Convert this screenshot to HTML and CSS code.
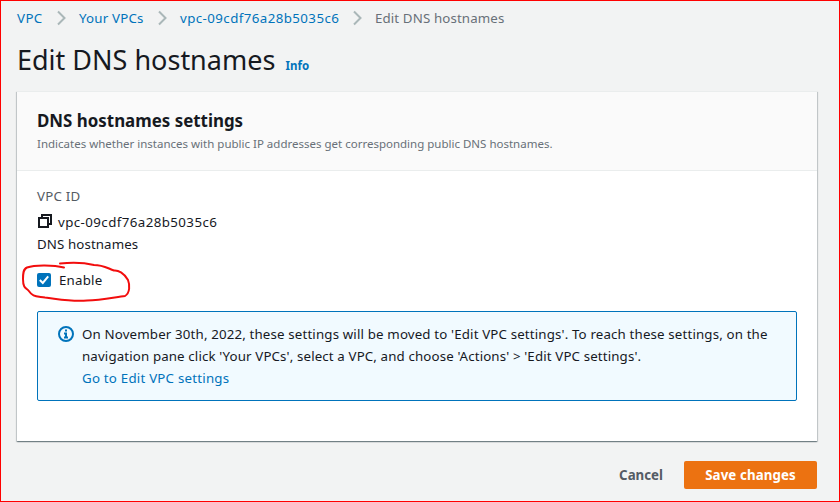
FILE: index.html
```html
<!DOCTYPE html>
<html lang="en">
<head>
<meta charset="utf-8">
<title>Edit DNS hostnames</title>
<link rel="stylesheet" href="styles.css">
</head>
<body>
<div class="page">
  <nav class="breadcrumbs">
    <a class="crumb-root">VPC</a>
    <svg class="chevron" width="10" height="16" viewBox="0 0 10 16"><path d="M1 1.5 7.5 8 1 14.5"/></svg>
    <a class="crumb-list">Your VPCs</a>
    <svg class="chevron" width="10" height="16" viewBox="0 0 10 16"><path d="M1 1.5 7.5 8 1 14.5"/></svg>
    <a class="crumb-id">vpc-09cdf76a28b5035c6</a>
    <svg class="chevron" width="10" height="16" viewBox="0 0 10 16"><path d="M1 1.5 7.5 8 1 14.5"/></svg>
    <span class="crumb-current">Edit DNS hostnames</span>
  </nav>
  <header class="title-row">
    <h1>Edit DNS hostnames</h1>
    <a class="info-link">Info</a>
  </header>
  <main class="card">
    <div class="card-header">
      <h2>DNS hostnames settings</h2>
      <p>Indicates whether instances with public IP addresses get corresponding public DNS hostnames.</p>
    </div>
    <div class="card-body">
      <div class="label">VPC ID</div>
      <div class="vpc-value">
        <svg width="16" height="16" viewBox="0 0 16 16"><path d="M2 5h9v9H2zM5 5V2h9v9h-3"/></svg>
        <span>vpc-09cdf76a28b5035c6</span>
      </div>
      <div class="field-name">DNS hostnames</div>
      <div class="enable-row">
        <span class="checkbox"><svg width="14" height="14" viewBox="0 0 14 14"><path d="M2.8 7 5.8 10 11.2 3.4"/></svg></span>
        <span class="enable-label">Enable</span>
        <svg class="annotation" width="112" height="46" viewBox="0 0 112 46"><path d="M42 7.500C32 5 13 4.500 5 7.500C1 9 1 14 1 19C1 27 3 28 6 30C11 37 13 36 23 37.500C39 39.500 51 42 65 40.500C79 40 94 37 103 36C108 33 108 25 106 20C102 13 96 10 92 10.500C85 8 81 5 72 5C64 3 52 2 38 3.500"/></svg>
      </div>
      <div class="notice">
        <svg width="16" height="16" viewBox="0 0 16 16"><circle cx="8" cy="8" r="7"/><path d="M7 4.500h2M6 7.500h2V11M6 11.500h4"/></svg>
        <div class="notice-text">
          <div class="line-one">On November 30th, 2022, these settings will be moved to 'Edit VPC settings'. To reach these settings, on the</div>
          <div class="line-two">navigation pane click 'Your VPCs', select a VPC, and choose 'Actions' &gt; 'Edit VPC settings'.</div>
          <a class="line-link">Go to Edit VPC settings</a>
        </div>
      </div>
    </div>
  </main>
  <footer class="actions">
    <span class="cancel">Cancel</span>
    <span class="save">Save changes</span>
  </footer>
</div>
</body>
</html>
```
FILE: styles.css
```css
* { box-sizing: border-box; }
body {
  margin: 0;
  font: 14px/22px "Noto Sans", sans-serif;
  color: #16191f;
  white-space: nowrap;
}
h1, h2, p { margin: 0; }
svg { flex: none; fill: none; }
a { color: #0073bb; }
.page {
  width: 840px;
  height: 502px;
  overflow: hidden;
  border: 1px solid #f00;
  background: #f2f3f3;
  padding: 6px 22px 0 16px;
}
.breadcrumbs { display: flex; align-items: center; height: 22px; font-size: 13.300px; }
.chevron { stroke: #aab7b8; stroke-width: 2; margin: 0 12px 0 13px; }
.crumb-root { width: 27px; letter-spacing: .4px; }
.crumb-list { width: 66px; letter-spacing: .2px; }
.crumb-id { width: 160px; letter-spacing: .42px; }
.crumb-current { color: #687078; letter-spacing: .12px; }
.title-row { display: flex; align-items: baseline; height: 62px; padding-top: 13px; }
h1 { font-size: 27px; line-height: 36px; font-weight: 400; width: 268.500px; }
.info-link { font-size: 11.500px; font-weight: 700; }
.card {
  height: 350px;
  width: 800px;
  background: #fff;
  border-top: 1px solid #eaeded;
  box-shadow: 0 1px 1px rgba(0,28,36,.35), 1px 1px 1px rgba(0,28,36,.15), -1px 1px 1px rgba(0,28,36,.15);
}
.card-header { height: 79px; padding: 18px 20px 0; background: #fafafa; border-bottom: 1px solid #eaeded; }
h2 { font-size: 16.900px; line-height: 22px; font-weight: 700; }
.card-header p { font-size: 11.500px; line-height: 22px; color: #687078; margin-top: 1px; }
.card-body { padding: 14px 20px 0; font-size: 13.300px; }
.label { color: #545b64; height: 25px; letter-spacing: .2px; }
.vpc-value { display: flex; align-items: center; gap: 5px; height: 24px; letter-spacing: .42px; }
.vpc-value svg { stroke: #16191f; stroke-width: 2; position: relative; top: -1px; }
.field-name { height: 22px; margin-top: -1px; margin-bottom: 14px; letter-spacing: .1px; }
.enable-row { position: relative; display: flex; align-items: center; gap: 8px; height: 22px; }
.enable-label { letter-spacing: .2px; }
.checkbox { width: 14px; height: 14px; background: #0073bb; border-radius: 2px; }
.checkbox svg { display: block; stroke: #fff; stroke-width: 2; }
.annotation { position: absolute; left: -15px; top: -9px; stroke: #f20d0d; stroke-width: 2; stroke-linecap: round; stroke-linejoin: round; }
.notice {
  display: flex;
  gap: 8px;
  width: 760px;
  height: 90px;
  margin-top: 20px;
  padding: 11px 20px 0;
  border: 1px solid #0073bb;
  border-radius: 2px;
  background: #f1faff;
}
.notice svg { stroke: #0073bb; stroke-width: 2; margin-top: 3px; }
.line-one { letter-spacing: .15px; }
.line-two { letter-spacing: .13px; }
.line-link { letter-spacing: .22px; }
.actions { display: flex; justify-content: flex-end; align-items: center; gap: 21px; height: 28px; margin-top: 20px; font-size: 13.300px; font-weight: 700; }
.cancel { color: #545b64; }
.save { width: 133px; height: 28px; line-height: 28px; text-align: center; letter-spacing: .1px; color: #fff; background: #ec7211; border-radius: 2px; }
```
